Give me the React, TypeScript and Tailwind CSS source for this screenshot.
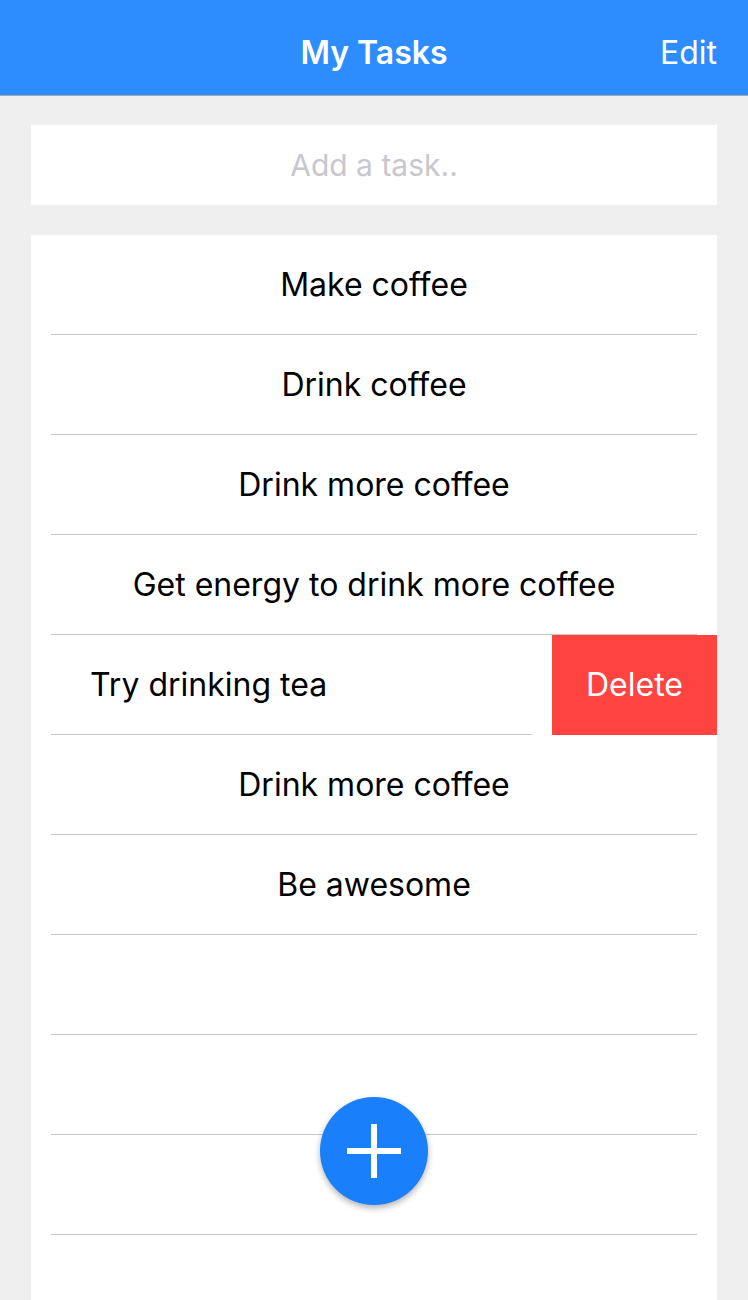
import React from "react";

const tasks = [
  "Make coffee",
  "Drink coffee",
  "Drink more coffee",
  "Get energy to drink more coffee",
  "__swiped__",
  "Drink more coffee",
  "Be awesome",
  "",
  "",
  "",
  "",
];

export default function App() {
  return (
    <div
      className="w-[748px] h-[1300px] overflow-hidden bg-[#efefef] flex flex-col"
      style={{ fontFamily: "Inter, 'Noto Sans', sans-serif" }}
    >
      <div className="h-[96px] shrink-0 bg-[#2d8cfe] border-b border-[#a9a9a9] flex items-center relative pt-[10px]">
        <div className="flex-1 text-center text-white text-[32px] font-semibold">My Tasks</div>
        <div className="absolute right-[31px] top-0 h-full pt-[10px] flex items-center text-white text-[32px]">Edit</div>
      </div>
      <div className="px-[31px] pt-[29px] flex flex-col flex-1 min-h-0">
        <div className="h-[80px] bg-white flex items-center justify-center text-[30px] text-[#c7c7cd]">
          Add a task..
        </div>
        <div className="mt-[30px] bg-white flex-1 relative overflow-hidden">
          {tasks.map((t, i) =>
            t === "__swiped__" ? (
              <div key={i} className="h-[100px] flex">
                <div className="flex-1 ml-[20px] mr-[20px] border-b border-[#c8c8c8] flex items-center pl-[39px] text-[32px] text-black">
                  Try drinking tea
                </div>
                <div className="w-[165px] h-[100px] bg-[#ff4340] flex items-center justify-center text-white text-[32px]">
                  Delete
                </div>
              </div>
            ) : (
              <div key={i} className="h-[100px] mx-[20px] border-b border-[#c8c8c8] flex items-center justify-center text-[32px] text-black">
                {t}
              </div>
            )
          )}
          <div className="absolute left-[289px] top-[862px] w-[108px] h-[108px] rounded-full bg-[#1a7ffa] shadow-[0_3px_6px_rgba(0,0,0,0.3)] flex items-center justify-center">
            <svg width="54" height="54" viewBox="0 0 54 54">
              <rect x="24" y="0" width="6" height="54" fill="white" />
              <rect x="0" y="24" width="54" height="6" fill="white" />
            </svg>
          </div>
        </div>
      </div>
    </div>
  );
}
